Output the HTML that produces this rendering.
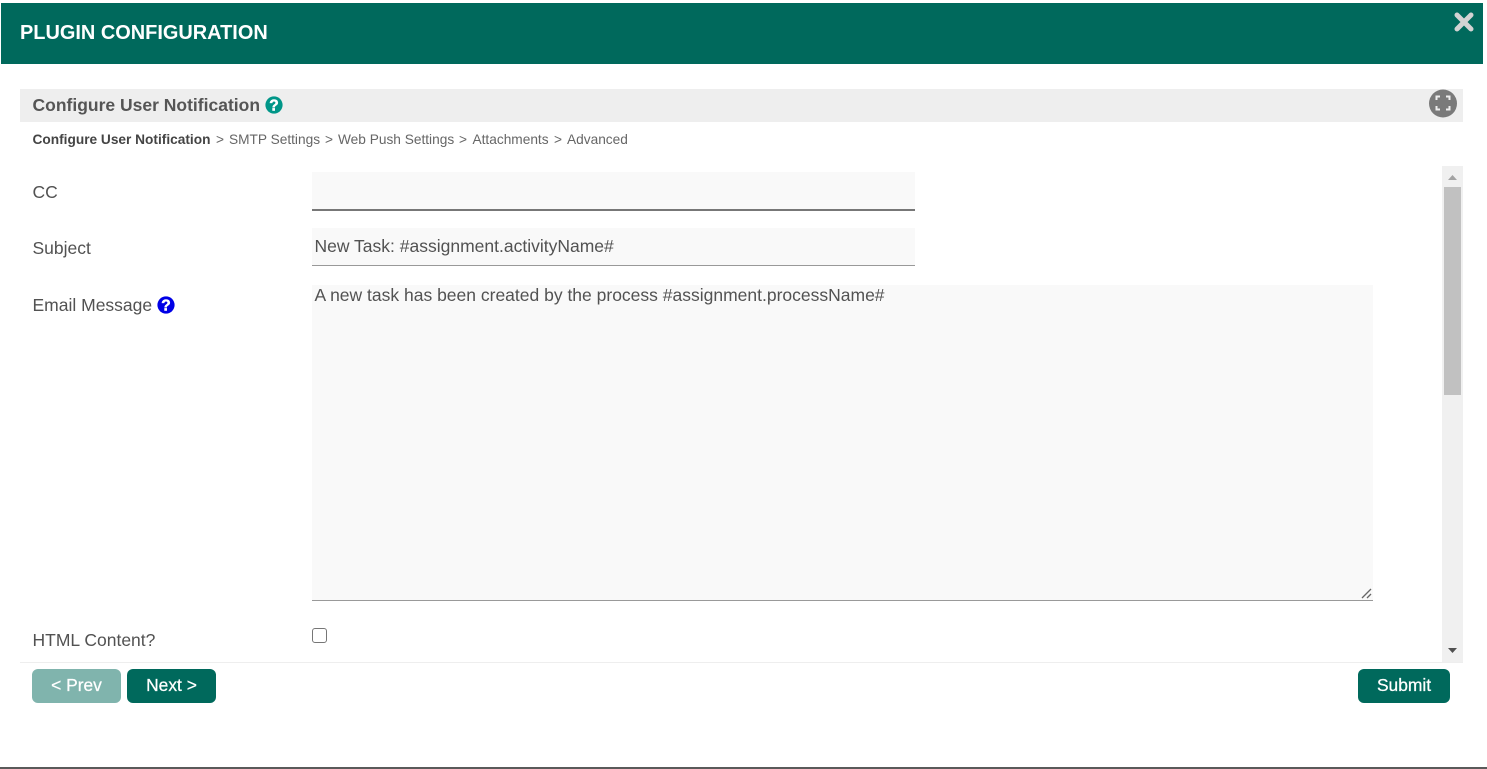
<!DOCTYPE html>
<html>
<head>
<meta charset="utf-8">
<style>
html,body{margin:0;padding:0;width:1487px;height:769px;overflow:hidden;background:#fff;font-family:"Liberation Sans",Arial,sans-serif;color:#555}
.a{position:absolute;white-space:nowrap}
.btn{position:absolute;top:669px;height:34px;border-radius:6px;background:#00695c;color:#fff;font-size:17.4px;line-height:32px;text-align:center;-webkit-text-stroke:.25px #fff}
.lbl{font-size:17.5px;color:#525252;left:32.5px;line-height:20px}
.bc{position:absolute;top:131px;font-size:13.7px;line-height:18px;color:#666;white-space:nowrap}
.q{font-family:"Liberation Sans";font-size:15.5px;font-weight:bold;fill:#fff;stroke:#fff;stroke-width:.5px}
</style>
</head>
<body>
<div class="a" style="left:1px;top:3px;width:1482px;height:61px;background:#00695c"></div>
<div class="a" style="left:20px;top:21px;font-size:19.95px;font-weight:bold;color:#fff;line-height:24px">PLUGIN CONFIGURATION</div>
<svg class="a" style="left:1453px;top:11px" width="22" height="22" viewBox="0 0 22 22"><path d="M4 4 L18 18 M18 4 L4 18" stroke="#d3d3d3" stroke-width="5" stroke-linecap="round"/></svg>

<div class="a" style="left:20px;top:89px;width:1443px;height:33px;background:#eee"></div>
<div class="a" style="left:32.5px;top:94px;font-size:17.5px;font-weight:bold;color:#555;line-height:22px">Configure User Notification</div>
<svg class="a" style="left:265px;top:96px" width="18" height="18" viewBox="0 0 18 18"><circle cx="9" cy="9" r="8.6" fill="#009688"/><text class="q" x="9" y="14.5" text-anchor="middle">?</text></svg>
<svg class="a" style="left:1428px;top:89px" width="30" height="30" viewBox="0 0 30 30"><circle cx="15" cy="14.5" r="14" fill="#7a7a7a"/><path d="M8.5 11 V7.5 H12 M18 7.5 H21.5 V11 M21.5 17 V20.5 H18 M12 20.5 H8.5 V17" fill="none" stroke="#eee" stroke-width="2"/></svg>

<div class="bc" style="left:32.5px;font-weight:bold;color:#444">Configure User Notification</div>
<div class="bc" style="left:216px">&gt;</div>
<div class="bc" style="left:229px">SMTP Settings</div>
<div class="bc" style="left:325px">&gt;</div>
<div class="bc" style="left:338px">Web Push Settings</div>
<div class="bc" style="left:459px">&gt;</div>
<div class="bc" style="left:472.5px">Attachments</div>
<div class="bc" style="left:554px">&gt;</div>
<div class="bc" style="left:567px">Advanced</div>

<div class="a lbl" style="top:182px">CC</div>
<div class="a" style="left:312px;top:172px;width:603px;height:37px;background:#f9f9f9;border-bottom:2px solid #777"></div>

<div class="a lbl" style="top:238px">Subject</div>
<div class="a" style="left:312px;top:228px;width:603px;height:37px;background:#f9f9f9;border-bottom:1px solid #999"></div>
<div class="a" style="left:314.5px;top:236px;font-size:17.5px;line-height:20px;color:#525252">New Task: #assignment.activityName#</div>

<div class="a lbl" style="top:295px">Email Message</div>
<svg class="a" style="left:157px;top:296px" width="18" height="18" viewBox="0 0 18 18"><circle cx="9" cy="9" r="8.6" fill="#0000e6"/><text class="q" x="9" y="14.5" text-anchor="middle">?</text></svg>
<div class="a" style="left:312px;top:285px;width:1061px;height:315px;background:#f9f9f9;border-bottom:1px solid #999"></div>
<div class="a" style="left:314.5px;top:285px;font-size:17.5px;line-height:20px;color:#525252">A new task has been created by the process #assignment.processName#</div>
<svg class="a" style="left:1360px;top:587px" width="13" height="13" viewBox="0 0 13 13"><path d="M2 11 L11 2 M7 11 L11 7" stroke="#666" stroke-width="1.3"/></svg>

<div class="a lbl" style="top:630px">HTML Content?</div>
<div class="a" style="left:312px;top:628px;width:12.5px;height:12.5px;border:1.25px solid #767676;border-radius:3px;background:#fff"></div>

<div class="a" style="left:1442px;top:166px;width:21px;height:496px;background:#f0f0f0"></div>
<div class="a" style="left:1444px;top:187px;width:17px;height:208px;background:#c1c1c1"></div>
<svg class="a" style="left:1442px;top:166px" width="21" height="496" viewBox="0 0 21 496"><path d="M6 14 L15 14 L10.5 9 Z" fill="#a3a3a3"/><path d="M6 482 L15 482 L10.5 487 Z" fill="#505050"/></svg>
<div class="a" style="left:20px;top:662px;width:1443px;height:1px;background:#eee"></div>

<div class="btn" style="left:32px;width:89px;background:#80b4ad">&lt; Prev</div>
<div class="btn" style="left:127px;width:89px">Next &gt;</div>
<div class="btn" style="left:1358px;width:92px">Submit</div>

<div class="a" style="left:0;top:767px;width:1487px;height:2px;background:#5a5a5a"></div>
</body>
</html>
